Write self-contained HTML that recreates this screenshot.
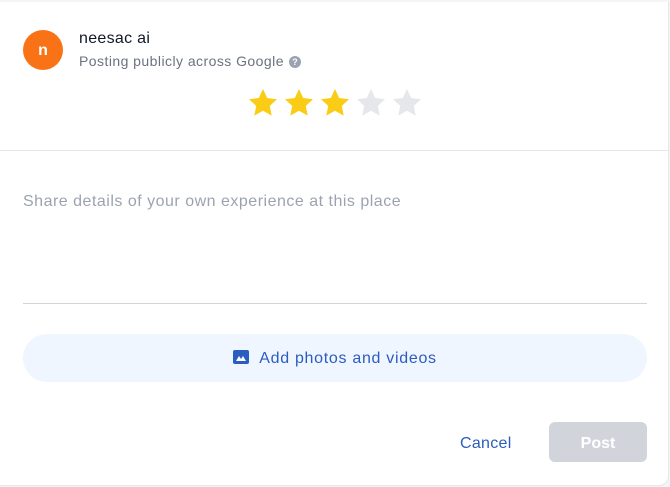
<!DOCTYPE html>
<html><head><style>
body{margin:0;background:#f3f4f6;font-family:"Liberation Sans",sans-serif;}
.card{position:absolute;left:0;top:2px;width:668px;height:483px;background:#fff;border-radius:0 0 10px 0;border-bottom:1px solid #e5e7eb;border-right:1px solid #e5e7eb;}
.av{position:absolute;left:23px;top:28px;width:40px;height:40px;border-radius:50%;background:#f97316;color:#fff;font-size:16px;font-weight:bold;text-align:center;line-height:42px;}
.name{position:absolute;left:79px;top:28px;font-size:16px;color:#111827;letter-spacing:0.3px;}
.sub{position:absolute;left:79px;top:51px;font-size:14px;color:#6b7280;letter-spacing:0.45px;}
.q{display:inline-block;width:12px;height:12px;border-radius:50%;background:#9ca3af;color:#fff;font-size:9px;font-weight:bold;text-align:center;line-height:12px;vertical-align:1px;margin-left:5px;letter-spacing:0;}
.stars{position:absolute;left:247px;top:85px;}
.hr{position:absolute;left:0;top:148px;width:668px;height:1px;background:#e5e7eb;}
.ph{position:absolute;left:23px;top:191px;font-size:16px;color:#9ca3af;letter-spacing:0.5px;}
.line{position:absolute;left:23px;top:301px;width:624px;height:1px;background:#d1d5db;}
.add{position:absolute;left:23px;top:332px;width:624px;height:48px;border-radius:24px;background:#eff6ff;color:#2b5cc0;font-size:16px;text-align:center;line-height:50px;letter-spacing:0.7px;}
.cancel{position:absolute;left:460px;top:433px;font-size:16px;color:#2b5cc0;letter-spacing:0.3px;}
.post{position:absolute;left:549px;top:420px;width:98px;height:40px;border-radius:6px;background:#d1d5db;color:#fff;font-size:16px;font-weight:bold;text-align:center;line-height:43px;}
</style></head><body>
<div class="card">
<div class="av">n</div>
<div class="name">neesac ai</div>
<div class="sub">Posting publicly across Google<span class="q">?</span></div>
<svg class="stars" width="180" height="32" viewBox="0 0 180 32">
<defs><path id="s" d="M16 2 L20.2 11 L30 12.2 L22.8 18.9 L24.7 28.6 L16 23.8 L7.3 28.6 L9.2 18.9 L2 12.2 L11.8 11 Z"/></defs>
<use href="#s" x="0" fill="#facc15"/><use href="#s" x="36" fill="#facc15"/><use href="#s" x="72" fill="#facc15"/><use href="#s" x="108" fill="#e5e7eb"/><use href="#s" x="144" fill="#e5e7eb"/>
</svg>
<div class="hr"></div>
<div class="ph">Share details of your own experience at this place</div>
<div class="line"></div>
<div class="add"><svg width="16" height="14" viewBox="0 0 16 14" style="vertical-align:-1px;margin-right:10px"><rect width="16" height="14" rx="2" fill="#2b5cc0"/><path d="M3 11 L6 6 L8 9 L10 6 L13 11 Z" fill="#fff"/></svg>Add photos and videos</div>
<div class="cancel">Cancel</div>
<div class="post">Post</div>
</div>
</body></html>
